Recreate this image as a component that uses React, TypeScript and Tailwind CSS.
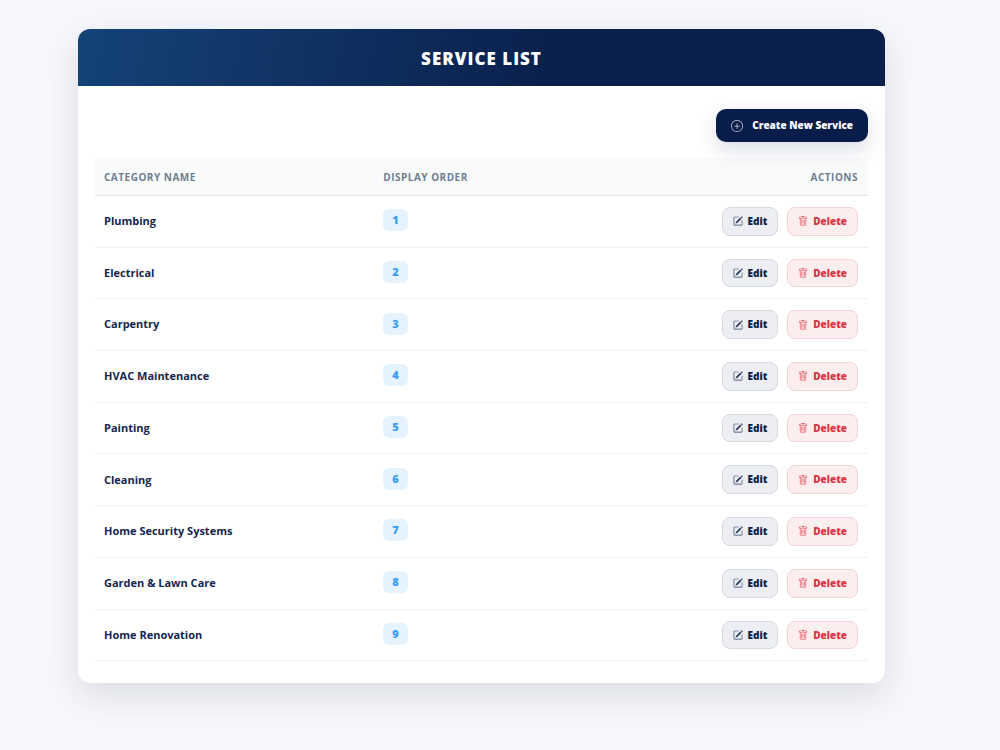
import { BsPencilSquare, BsPlusCircle, BsTrash } from "react-icons/bs";

const services = [
  { name: "Plumbing", order: 1 },
  { name: "Electrical", order: 2 },
  { name: "Carpentry", order: 3 },
  { name: "HVAC Maintenance", order: 4 },
  { name: "Painting", order: 5 },
  { name: "Cleaning", order: 6 },
  { name: "Home Security Systems", order: 7 },
  { name: "Garden & Lawn Care", order: 8 },
  { name: "Home Renovation", order: 9 },
];

const actionButton =
  "inline-flex items-center gap-[5px] rounded-lg border px-[10px] py-[5px] text-[10px] leading-[1.67] font-extrabold";

export default function App() {
  return (
    <div className="min-h-screen bg-[#f7f8fc] pt-[29px] pr-[115px] pb-16 pl-[78px] font-['Open_Sans','Noto_Sans',sans-serif] text-[#14264f]">
      <main className="overflow-hidden rounded-xl bg-white shadow-[0_12px_36px_rgba(20,30,60,0.13)]">
        <header className="bg-[linear-gradient(100deg,#144377_0%,#0a1f4b_60%,#0a1f4b_100%)] pt-[18px] pb-[15px]">
          <h1 className="text-center text-[17px] leading-6 font-extrabold tracking-[1px] text-white">SERVICE LIST</h1>
        </header>
        <div className="px-[17px] pt-[23px] pb-[22px]">
          <div className="mb-4 flex justify-end">
            <button
              type="button"
              className="flex items-center gap-[9px] rounded-[10px] bg-[#081d4a] px-[15px] py-2 text-[10px] leading-[17px] font-extrabold text-white shadow-[0_8px_20px_rgba(10,31,75,0.15)]"
            >
              <BsPlusCircle className="size-3 opacity-80" aria-hidden="true" />
              Create New Service
            </button>
          </div>
          <table className="w-full border-collapse text-[11px]">
            <thead>
              <tr className="border-b border-[#e3e7ea] bg-[#f9fbfb] text-[10px] leading-[17px] tracking-[0.5px] text-[#6f7e8f]">
                <th scope="col" className="w-[36%] px-[9px] pt-[11px] pb-[9px] text-left font-bold">CATEGORY NAME</th>
                <th scope="col" className="px-[10px] pt-[11px] pb-[9px] text-left font-bold">DISPLAY ORDER</th>
                <th scope="col" className="px-[10px] pt-[11px] pb-[9px] text-right font-bold">ACTIONS</th>
              </tr>
            </thead>
            <tbody>
              {services.map((service) => (
                <tr key={service.order} className="border-b border-[#f0f1f3]">
                  <td className="px-[9px] py-[11px] font-bold">{service.name}</td>
                  <td className="px-[10px] pt-[10px] pb-3">
                    <span className="inline-flex rounded-md bg-[#e4f3fe] px-[9px] py-[3px] text-[11px] leading-4 font-extrabold text-[#3b9cf5]">
                      {service.order}
                    </span>
                  </td>
                  <td className="px-[10px] py-[11px]">
                    <div className="flex justify-end gap-[9px]">
                      <button type="button" className={`${actionButton} border-[#d5d9e0] bg-[#eceef3] text-[#0a1f4b]`}>
                        <BsPencilSquare className="size-[10px] opacity-85" aria-hidden="true" />
                        Edit
                      </button>
                      <button type="button" className={`${actionButton} border-[#f6d3d6] bg-[#fcedee] text-[#dc3545]`}>
                        <BsTrash className="size-[10px] opacity-85" aria-hidden="true" />
                        Delete
                      </button>
                    </div>
                  </td>
                </tr>
              ))}
            </tbody>
          </table>
        </div>
      </main>
    </div>
  );
}
